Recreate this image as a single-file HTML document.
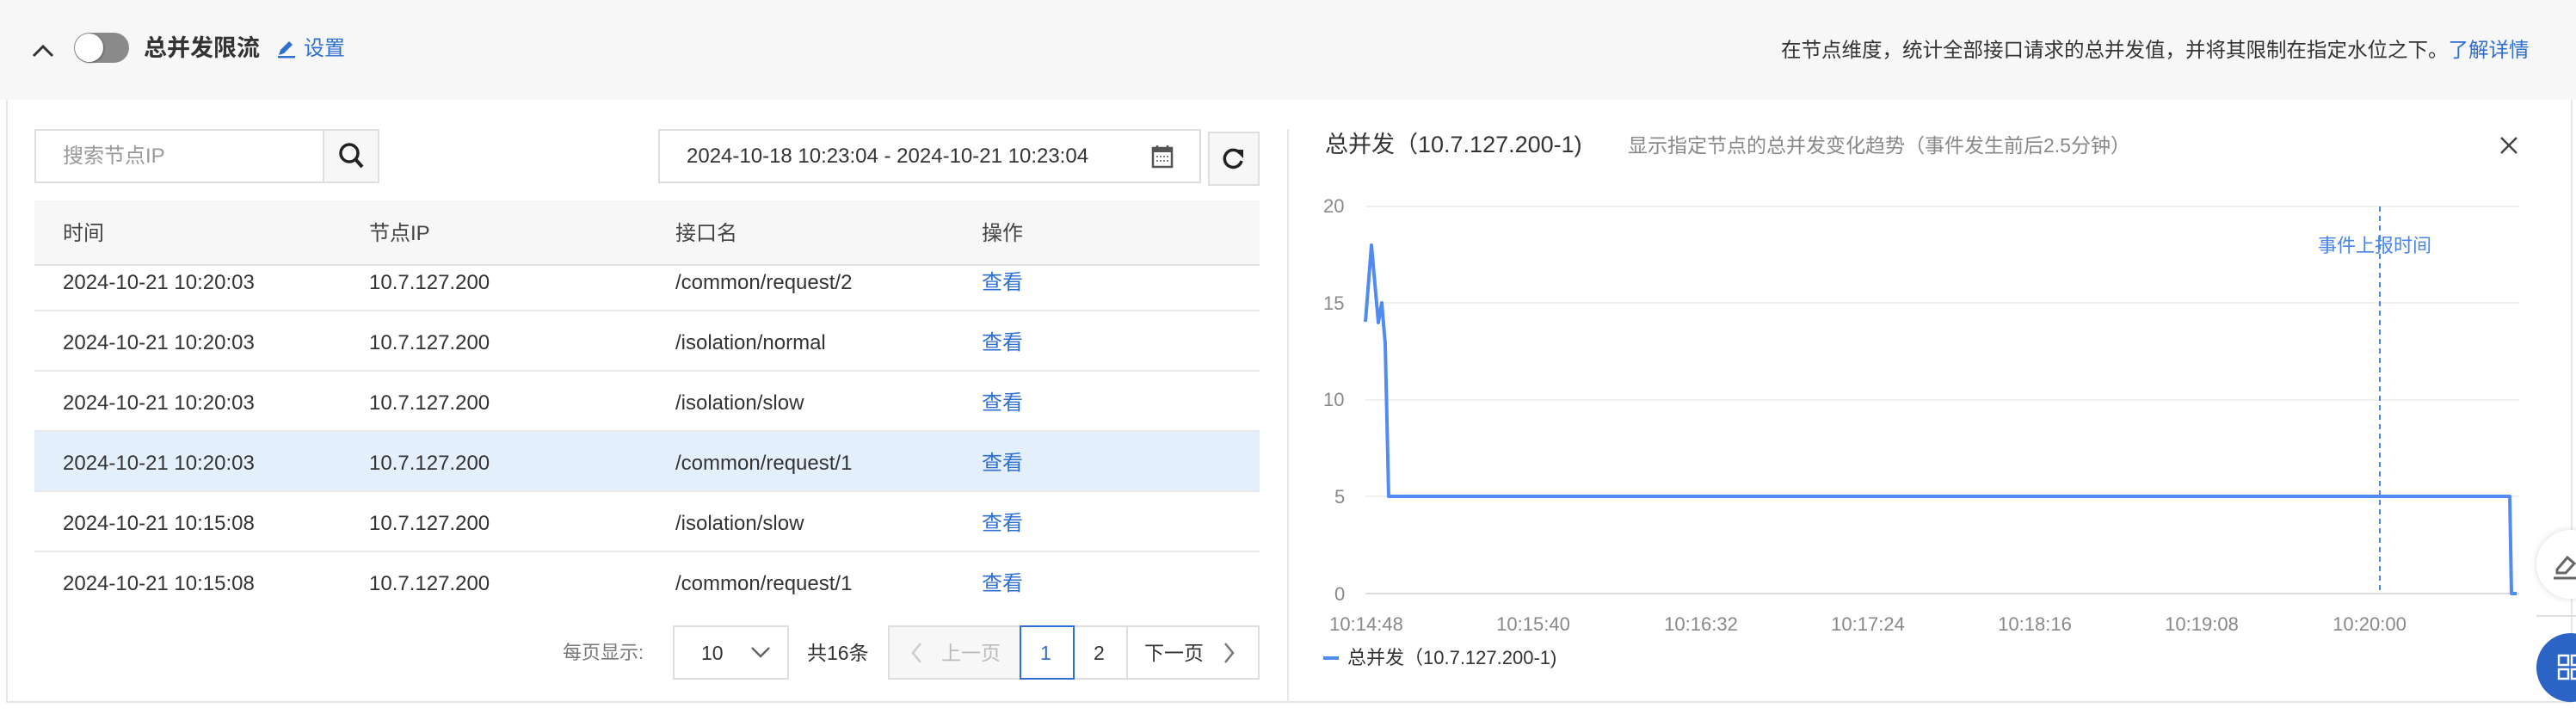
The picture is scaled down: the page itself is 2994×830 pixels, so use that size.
<!DOCTYPE html>
<html><head><meta charset="utf-8"><style>
*{box-sizing:border-box;margin:0;padding:0}
body{width:2994px;height:830px;background:#fff;font-family:"Liberation Sans","Noto Sans CJK SC",sans-serif;color:#333;position:relative;overflow:hidden;line-height:28px}
.a{position:absolute;white-space:nowrap;line-height:28px}
.hdr{position:absolute;left:0;top:0;width:2994px;height:116px;background:#f7f7f7}
.panel{position:absolute;left:7px;top:116px;width:2983px;height:701px;border-left:2px solid #e6e6e6;border-right:2px solid #e6e6e6;border-bottom:2px solid #e3e3e3;background:#fff}
.box{position:absolute;border:2px solid #dedede;background:#fff}
.td{font-size:24px;color:#333}
.lk{color:#2f6fd0}
.row{position:absolute;left:40px;width:1424px;border-bottom:2px solid #e8e8e8}
.yl{font-size:22px;color:#888}
.xl{font-size:22px;color:#888;transform:translateX(-50%)}
</style></head><body>
<div class="hdr"></div>
<svg class="a" style="left:36px;top:50px" width="28" height="18"><path d="M3 15 L14 4 L25 15" fill="none" stroke="#333" stroke-width="3"/></svg>
<div class="a" style="left:86px;top:38px;width:64px;height:35px;border-radius:18px;background:#8a8a8a"></div>
<div class="a" style="left:87px;top:39px;width:33px;height:33px;border-radius:50%;background:#fff;box-shadow:1px 1px 2px rgba(0,0,0,.3)"></div>
<div class="a" style="left:167px;top:40px;font-size:27px;font-weight:bold;color:#333;line-height:32px">总并发限流</div>
<svg class="a" style="left:321px;top:45px" width="24" height="24"><path d="M3 19 L5 13 L15 3 L19 7 L9 17 Z" fill="#2f6fd0"/><rect x="2" y="20" width="20" height="2.5" fill="#2f6fd0"/></svg>
<div class="a lk" style="left:353px;top:43px;font-size:24px">设置</div>
<div class="a" style="left:2070px;top:44px;font-size:23.5px;color:#333">在节点维度，统计全部接口请求的总并发值，并将其限制在指定水位之下。<span class="lk">了解详情</span></div>

<div class="panel"></div>
<div class="box" style="left:40px;top:150px;width:401px;height:63px"></div>
<div class="a" style="left:375px;top:152px;width:2px;height:59px;background:#dedede"></div>
<div class="a" style="left:377px;top:152px;width:62px;height:59px;background:#f7f7f7"></div>
<div class="a" style="left:73px;top:168px;font-size:24px;color:#999">搜索节点IP</div>
<svg class="a" style="left:392px;top:164px" width="34" height="36"><circle cx="14" cy="14" r="10" fill="none" stroke="#222" stroke-width="3.5"/><path d="M21 21 L29 30" stroke="#222" stroke-width="4"/></svg>
<div class="box" style="left:765px;top:150px;width:631px;height:63px"></div>
<div class="a" style="left:798px;top:168px;font-size:24px;color:#333">2024-10-18 10:23:04 - 2024-10-21 10:23:04</div>
<svg class="a" style="left:1338px;top:168px" width="26" height="28"><rect x="2" y="4" width="22" height="22" fill="none" stroke="#555" stroke-width="2.5"/><rect x="2" y="4" width="22" height="5" fill="#555"/><path d="M7 1v6M19 1v6" stroke="#555" stroke-width="2.5"/><path d="M6 14h14M6 19h14" stroke="#555" stroke-width="1.5" stroke-dasharray="2 2"/></svg>
<div class="box" style="left:1404px;top:153px;width:60px;height:63px;background:#f7f7f7"></div>
<svg class="a" style="left:1419px;top:170px" width="30" height="30"><path d="M22 8 A10 10 0 1 0 24 17" fill="none" stroke="#222" stroke-width="3.5"/><path d="M16 4 L26 4 L26 14 Z" fill="#222"/></svg>
<div class="a" style="left:1496px;top:150px;width:2px;height:666px;background:#e6e6e6"></div>

<div class="a" style="left:40px;top:233px;width:1424px;height:76px;background:#f7f7f7;border-bottom:2px solid #e3e3e3"></div>
<div class="a td" style="left:73px;top:258px;color:#444">时间</div>
<div class="a td" style="left:429px;top:258px;color:#444">节点IP</div>
<div class="a td" style="left:785px;top:258px;color:#444">接口名</div>
<div class="a td" style="left:1141px;top:258px;color:#444">操作</div>

<div class="row" style="top:309px;height:53px"></div>
<div class="a td" style="left:73px;top:315px">2024-10-21 10:20:03</div><div class="a td" style="left:429px;top:315px">10.7.127.200</div><div class="a td" style="left:785px;top:315px">/common/request/2</div><div class="a td lk" style="left:1141px;top:315px">查看</div>

<div class="row" style="top:362px;height:70px"></div>
<div class="a td" style="left:73px;top:385px">2024-10-21 10:20:03</div><div class="a td" style="left:429px;top:385px">10.7.127.200</div><div class="a td" style="left:785px;top:385px">/isolation/normal</div><div class="a td lk" style="left:1141px;top:385px">查看</div>

<div class="row" style="top:432px;height:70px"></div>
<div class="a td" style="left:73px;top:455px">2024-10-21 10:20:03</div><div class="a td" style="left:429px;top:455px">10.7.127.200</div><div class="a td" style="left:785px;top:455px">/isolation/slow</div><div class="a td lk" style="left:1141px;top:455px">查看</div>

<div class="row" style="top:502px;height:70px;background:#e4effc"></div>
<div class="a td" style="left:73px;top:525px">2024-10-21 10:20:03</div><div class="a td" style="left:429px;top:525px">10.7.127.200</div><div class="a td" style="left:785px;top:525px">/common/request/1</div><div class="a td lk" style="left:1141px;top:525px">查看</div>

<div class="row" style="top:572px;height:70px"></div>
<div class="a td" style="left:73px;top:595px">2024-10-21 10:15:08</div><div class="a td" style="left:429px;top:595px">10.7.127.200</div><div class="a td" style="left:785px;top:595px">/isolation/slow</div><div class="a td lk" style="left:1141px;top:595px">查看</div>

<div class="a td" style="left:73px;top:665px">2024-10-21 10:15:08</div><div class="a td" style="left:429px;top:665px">10.7.127.200</div><div class="a td" style="left:785px;top:665px">/common/request/1</div><div class="a td lk" style="left:1141px;top:665px">查看</div>

<div class="a" style="left:654px;top:745px;font-size:22px;color:#777">每页显示:</div>
<div class="box" style="left:782px;top:727px;width:135px;height:63px"></div>
<div class="a" style="left:815px;top:745px;font-size:23px;color:#333">10</div>
<svg class="a" style="left:872px;top:750px" width="24" height="16"><path d="M2 3 L12 13 L22 3" fill="none" stroke="#666" stroke-width="2.5"/></svg>
<div class="a" style="left:938px;top:745px;font-size:23px;color:#333">共16条</div>
<div class="box" style="left:1032px;top:727px;width:155px;height:63px;background:#f7f7f7"></div>
<svg class="a" style="left:1058px;top:746px" width="14" height="26"><path d="M12 2 L3 13 L12 24" fill="none" stroke="#ccc" stroke-width="2.5"/></svg>
<div class="a" style="left:1094px;top:745px;font-size:23px;color:#bbb">上一页</div>
<div class="box" style="left:1247px;top:727px;width:64px;height:63px"></div>
<div class="a" style="left:1271px;top:745px;font-size:23px;color:#333">2</div>
<div class="box" style="left:1309px;top:727px;width:155px;height:63px"></div>
<div class="a" style="left:1330px;top:745px;font-size:23px;color:#333">下一页</div>
<svg class="a" style="left:1422px;top:746px" width="14" height="26"><path d="M2 2 L11 13 L2 24" fill="none" stroke="#777" stroke-width="2.5"/></svg>
<div class="box" style="left:1185px;top:727px;width:64px;height:63px;border-color:#2f6fd0"></div>
<div class="a" style="left:1209px;top:745px;font-size:23px;color:#2f6fd0">1</div>

<div class="a" style="left:1540px;top:152px;font-size:27px;color:#333;line-height:32px">总并发（10.7.127.200-1)</div>
<div class="a" style="left:1892px;top:155px;font-size:23px;color:#888">显示指定节点的总并发变化趋势（事件发生前后2.5分钟）</div>
<svg class="a" style="left:2904px;top:157px" width="24" height="24"><path d="M3 3 L21 21 M21 3 L3 21" stroke="#444" stroke-width="2.5"/></svg>

<div class="a yl" style="left:1538px;top:226px">20</div>
<div class="a yl" style="left:1538px;top:339px">15</div>
<div class="a yl" style="left:1538px;top:451px">10</div>
<div class="a yl" style="left:1551px;top:564px">5</div>
<div class="a yl" style="left:1551px;top:677px">0</div>
<svg class="a" style="left:0;top:0" width="2994" height="830">
<g stroke="#f0f0f0" stroke-width="2"><path d="M1587 240H2928M1587 352H2928M1587 465H2928M1587 577H2928"/></g>
<path d="M1587 690H2928" stroke="#dcdcdc" stroke-width="2"/>
<path d="M2766 240V690" stroke="#4a86e8" stroke-width="2" stroke-dasharray="6 5"/>
<polyline points="1587,374 1594,285 1602,375 1606,352 1610,400 1614,577 2917,577 2919,690 2925,690" fill="none" stroke="#4f8bf0" stroke-width="4" stroke-linejoin="round"/>
<path d="M1538 765H1556" stroke="#4f8bf0" stroke-width="4"/>
</svg>
<div class="a" style="left:2694px;top:272px;font-size:22px;color:#4a86e8">事件上报时间</div>
<div class="a xl" style="left:1588px;top:712px">10:14:48</div>
<div class="a xl" style="left:1782px;top:712px">10:15:40</div>
<div class="a xl" style="left:1977px;top:712px">10:16:32</div>
<div class="a xl" style="left:2171px;top:712px">10:17:24</div>
<div class="a xl" style="left:2365px;top:712px">10:18:16</div>
<div class="a xl" style="left:2559px;top:712px">10:19:08</div>
<div class="a xl" style="left:2754px;top:712px">10:20:00</div>
<div class="a" style="left:1566px;top:751px;font-size:22px;color:#333">总并发（10.7.127.200-1)</div>

<div class="a" style="left:2948px;top:715px;width:46px;height:2px;background:#e0e0e0"></div>
<div class="a" style="left:2948px;top:616px;width:80px;height:80px;border-radius:50%;background:#fff;box-shadow:0 0 8px rgba(0,0,0,.15)"></div>
<svg class="a" style="left:2968px;top:640px" width="26" height="36"><path d="M4 22 L16 8 L24 15 L14 26 H4 Z" fill="none" stroke="#666" stroke-width="3"/><path d="M0 32 H26" stroke="#666" stroke-width="3"/></svg>
<div class="a" style="left:2948px;top:736px;width:80px;height:80px;border-radius:50%;background:#2b64c4"></div>
<svg class="a" style="left:2972px;top:760px" width="22" height="32"><g fill="none" stroke="#fff" stroke-width="2.5"><rect x="2" y="2" width="11" height="11"/><rect x="17" y="2" width="11" height="11"/><rect x="2" y="18" width="11" height="11"/><rect x="17" y="18" width="11" height="11"/></g></svg>
</body></html>
